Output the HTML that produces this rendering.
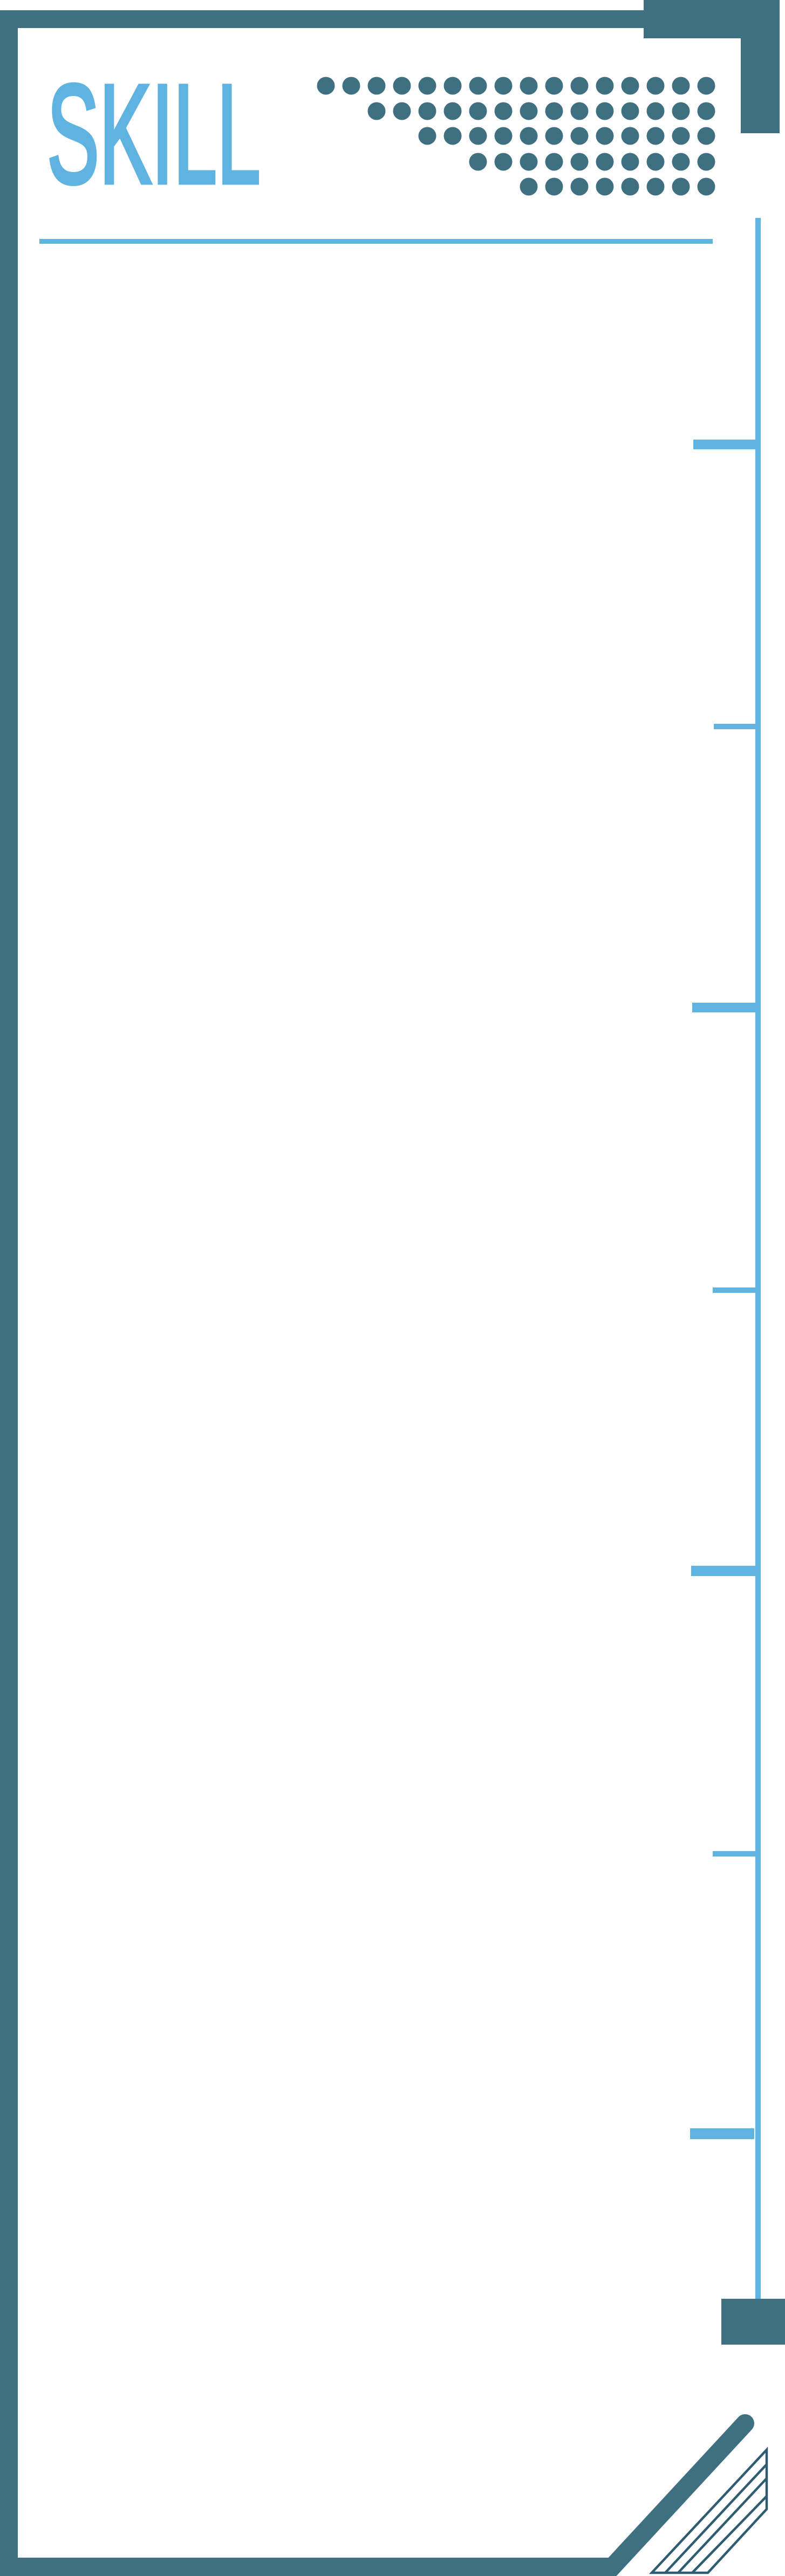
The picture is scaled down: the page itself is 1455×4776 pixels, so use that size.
<!DOCTYPE html>
<html><head><meta charset="utf-8"><style>
html,body{margin:0;padding:0;background:#fff;}
body{width:1455px;height:4776px;overflow:hidden;position:relative;}
svg{position:absolute;left:0;top:0;}
</style></head><body>
<svg width="1455" height="4776" viewBox="0 0 1455 4776" xmlns="http://www.w3.org/2000/svg">
<rect x="0" y="19" width="1200" height="33" fill="#3f7082"/>
<rect x="0" y="19" width="33" height="4757" fill="#3f7082"/>
<rect x="1193" y="0" width="252" height="71" fill="#3f7082"/>
<rect x="1373" y="0" width="72" height="247" fill="#3f7082"/>
<text x="87" y="339" font-family="Liberation Sans, sans-serif" font-size="262" fill="#5eb3e0" stroke="#5eb3e0" stroke-width="7" stroke-linejoin="miter" textLength="396" lengthAdjust="spacingAndGlyphs">SKILL</text>
<g fill="#3f7082" id="dots"></g>
<rect x="73" y="443" width="1248" height="9" fill="#5eb3e0"/>
<rect x="1400" y="404" width="10" height="3860" fill="#5eb3e0"/>
<g fill="#5eb3e0">
<rect x="1285" y="815" width="115" height="18"/>
<rect x="1323" y="1342" width="77" height="10"/>
<rect x="1283" y="1859" width="117" height="18"/>
<rect x="1321" y="2387" width="79" height="10"/>
<rect x="1281" y="2903" width="119" height="19"/>
<rect x="1321" y="3432" width="79" height="10"/>
<rect x="1279" y="3946" width="119" height="20"/>
</g>
<rect x="1337" y="4262" width="118" height="85" fill="#3f7082"/>
<path d="M-30 4759 H1135 L1381 4493" fill="none" stroke="#3f7082" stroke-width="34" stroke-linecap="round" stroke-linejoin="miter"/>
<g fill="none" stroke="#2f5c70" stroke-width="4.5">
<polygon points="1208,4770 1421,4542 1421,4652 1312,4770"/>
<line x1="1233" y1="4770" x2="1421" y2="4569"/>
<line x1="1257" y1="4770" x2="1421" y2="4595"/>
<line x1="1283" y1="4770" x2="1421" y2="4628"/>
</g>
</svg>
<script>
var g=document.getElementById('dots');var ys=[159,206,252,300,346];
for(var r=0;r<5;r++){for(var i=2*r;i<16;i++){var c=document.createElementNS('http://www.w3.org/2000/svg','circle');c.setAttribute('cx',604+i*47);c.setAttribute('cy',ys[r]);c.setAttribute('r',16.5);g.appendChild(c);}}
</script>
</body></html>
